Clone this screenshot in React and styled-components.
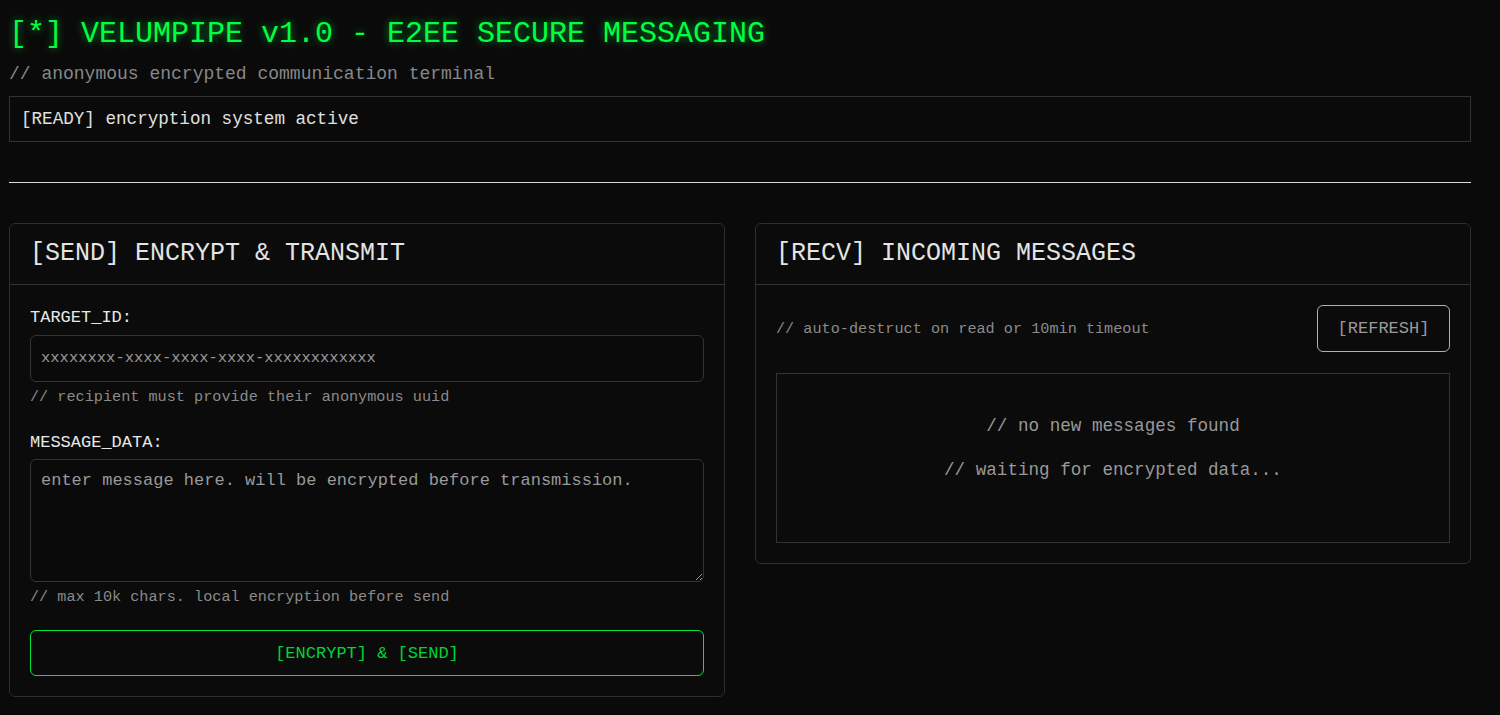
import React, { useState } from "react";
import styled, { createGlobalStyle } from "styled-components";

const GlobalStyle = createGlobalStyle`
  * { box-sizing: border-box; }
  html, body {
    margin: 0;
    padding: 0;
    background: #0a0a0a;
    color: #e0e0e0;
    font-family: "Courier New", "Liberation Mono", monospace;
  }
`;

const Page = styled.div`
  width: 1471px;
  padding: 17px 0 20px 9px;
`;

const Title = styled.h1`
  margin: 0;
  font-size: 30px;
  font-weight: 400;
  line-height: normal;
  color: #00ff41;
  text-shadow: 0 0 8px rgba(0, 255, 65, 0.55);
`;

const Subtitle = styled.p`
  margin: 13px 0 0;
  font-size: 18px;
  line-height: normal;
  color: #888;
`;

const StatusBox = styled.div`
  margin-top: 12px;
  border: 1px solid #333;
  padding: 12px 11px;
  font-size: 17.6px;
  line-height: normal;
  color: #e0e0e0;
`;

const Divider = styled.hr`
  margin: 40px 0;
  border: 0;
  border-top: 1px solid #d8d8d8;
`;

const Columns = styled.div`
  display: grid;
  grid-template-columns: 1fr 1fr;
  gap: 30px;
  align-items: start;
`;

const Panel = styled.section`
  border: 1px solid #2e2e2e;
  border-radius: 6px;
  background: #0b0b0b;
`;

const PanelHeader = styled.div`
  padding: 15px 20px 16px;
  border-bottom: 1px solid #333;
`;

const PanelTitle = styled.h2`
  margin: 0;
  font-size: 25px;
  font-weight: 400;
  line-height: normal;
  color: #e4e4e4;
`;

const PanelBody = styled.div`
  padding: 20px;
`;

const Field = styled.div`
  margin-bottom: 24px;
`;

const Label = styled.label`
  display: block;
  margin-bottom: 4px;
  padding-top: 1px;
  font-size: 17px;
  line-height: 1.45;
  color: #e8e8e8;
`;

const baseControl = `
  display: block;
  width: 100%;
  border: 1px solid #333;
  border-radius: 6px;
  background: #0a0a0a;
  color: #e0e0e0;
  font-family: "Courier New", "Liberation Mono", monospace;
  outline: none;
  &::placeholder { color: #999; }
`;

const Input = styled.input`
  ${baseControl}
  height: 47px;
  padding: 0 10px;
  font-size: 15.5px;
`;

const TextArea = styled.textarea`
  ${baseControl}
  height: 123px;
  padding: 11px 10px 10px;
  font-size: 17px;
  line-height: normal;
  resize: vertical;
`;

const Hint = styled.div`
  margin-top: 6px;
  font-size: 15.2px;
  line-height: normal;
  color: #8a8a8a;
`;

const SendButton = styled.button`
  display: block;
  width: 100%;
  height: 46px;
  border: 1px solid #00e63a;
  border-radius: 6px;
  background: transparent;
  color: #00d438;
  font-family: "Courier New", "Liberation Mono", monospace;
  font-size: 17px;
  cursor: pointer;
`;

const Toolbar = styled.div`
  display: flex;
  align-items: center;
  justify-content: space-between;
  margin-bottom: 21px;
`;

const ToolbarNote = styled.span`
  font-size: 15.2px;
  color: #8a8a8a;
`;

const GhostButton = styled.button`
  width: 133px;
  height: 47px;
  border: 1px solid #b0b0b0;
  border-radius: 6px;
  background: transparent;
  color: #9a9a9a;
  font-family: "Courier New", "Liberation Mono", monospace;
  font-size: 17px;
  cursor: pointer;
`;

const MessageBox = styled.div`
  height: 170px;
  border: 1px solid #333;
  padding: 42px 20px 20px;
  text-align: center;
`;

const EmptyLine = styled.p`
  margin: 0 0 24px;
  font-size: 17.6px;
  line-height: normal;
  color: #999;
`;

export default function App() {
  const [target, setTarget] = useState("");
  const [message, setMessage] = useState("");

  return (
    <Page>
      <GlobalStyle />
      <Title>[*] VELUMPIPE v1.0 - E2EE SECURE MESSAGING</Title>
      <Subtitle>// anonymous encrypted communication terminal</Subtitle>
      <StatusBox>[READY] encryption system active</StatusBox>
      <Divider />
      <Columns>
        <Panel>
          <PanelHeader>
            <PanelTitle>[SEND] ENCRYPT &amp; TRANSMIT</PanelTitle>
          </PanelHeader>
          <PanelBody>
            <Field>
              <Label htmlFor="target">TARGET_ID:</Label>
              <Input
                id="target"
                value={target}
                onChange={(e) => setTarget(e.target.value)}
                placeholder="xxxxxxxx-xxxx-xxxx-xxxx-xxxxxxxxxxxx"
              />
              <Hint>// recipient must provide their anonymous uuid</Hint>
            </Field>
            <Field>
              <Label htmlFor="message">MESSAGE_DATA:</Label>
              <TextArea
                id="message"
                value={message}
                onChange={(e) => setMessage(e.target.value)}
                placeholder="enter message here. will be encrypted before transmission."
              />
              <Hint>// max 10k chars. local encryption before send</Hint>
            </Field>
            <SendButton>[ENCRYPT] &amp; [SEND]</SendButton>
          </PanelBody>
        </Panel>

        <Panel>
          <PanelHeader>
            <PanelTitle>[RECV] INCOMING MESSAGES</PanelTitle>
          </PanelHeader>
          <PanelBody>
            <Toolbar>
              <ToolbarNote>// auto-destruct on read or 10min timeout</ToolbarNote>
              <GhostButton>[REFRESH]</GhostButton>
            </Toolbar>
            <MessageBox>
              <EmptyLine>// no new messages found</EmptyLine>
              <EmptyLine>// waiting for encrypted data...</EmptyLine>
            </MessageBox>
          </PanelBody>
        </Panel>
      </Columns>
    </Page>
  );
}
